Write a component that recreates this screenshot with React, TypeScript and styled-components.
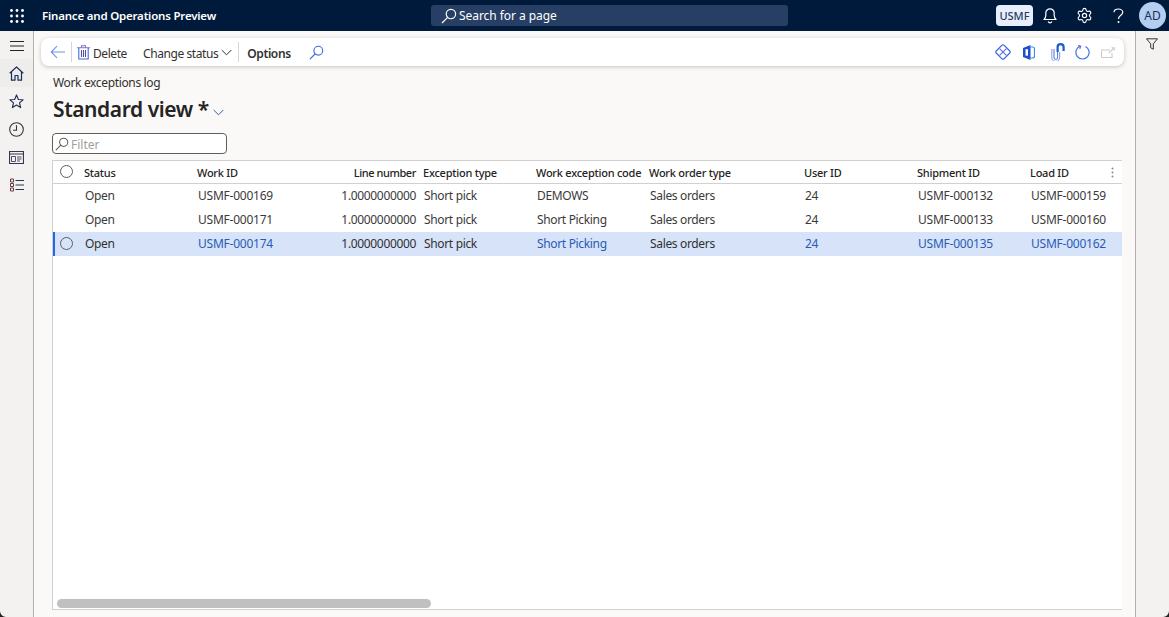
import React from "react";
import styled, { createGlobalStyle } from "styled-components";
import { Settings } from "lucide-react";

const Global = createGlobalStyle`
  html, body { margin: 0; padding: 0; height: 100%; overflow: hidden; background: #faf9f8; }
  #root { height: 100%; }
  * { box-sizing: border-box; }
`;

const Page = styled.div`
  position: relative;
  width: 1169px;
  height: 617px;
  display: grid;
  grid-template-rows: 31px 1fr;
  font-family: "Noto Sans", "Open Sans", sans-serif;
  font-size: 12px;
  color: #323130;
  overflow: hidden;
`;

const TopBar = styled.header`
  background: #001a3b;
  display: grid;
  grid-template-columns: 431px 357px 1fr;
  align-items: center;
  color: #fff;
`;
const Brand = styled.div`
  display: flex;
  align-items: center;
  padding-left: 10px;
  gap: 18px;
  font-weight: 600;
  font-size: 11.5px;
  letter-spacing: -0.2px;
`;
const SearchBox = styled.div`
  height: 21px;
  background: #273f64;
  border-radius: 3px;
  display: flex;
  align-items: center;
  padding-left: 10px;
  gap: 2px;
  font-size: 12px;
  letter-spacing: -0.05px;
  color: #fff;
`;
const TopActions = styled.div`
  display: flex;
  justify-content: flex-end;
  align-items: center;
  height: 31px;
`;
const Company = styled.div`
  width: 37px;
  height: 21px;
  background: #e8effc;
  color: #283a5e;
  border-radius: 4px;
  font-weight: 500;
  font-size: 11px;
  display: flex;
  align-items: center;
  justify-content: center;
`;
const TopIcon = styled.div<{ $w: number }>`
  width: ${(p) => p.$w}px;
  display: flex;
  justify-content: center;
  align-items: center;
`;
const Avatar = styled.div`
  width: 27px;
  height: 27px;
  border-radius: 50%;
  background: #b4cdf2;
  color: #1f2f4f;
  font-size: 12px;
  display: flex;
  align-items: center;
  justify-content: center;
  margin: 0 3px 0 4px;
`;

const Body = styled.div`
  display: grid;
  grid-template-columns: 34px 1fr 34px;
  min-height: 0;
`;
const LeftRail = styled.nav`
  background: #f3f2f1;
  border-right: 1px solid #b3b0ad;
  padding-top: 2px;
  display: flex;
  flex-direction: column;
  align-items: stretch;
`;
const RailItem = styled.div<{ $active?: boolean; $h: number }>`
  height: ${(p) => p.$h}px;
  display: flex;
  justify-content: center;
  align-items: center;
  background: ${(p) => (p.$active ? "#eeedec" : "transparent")};
  border-radius: ${(p) => (p.$active ? "0 4px 4px 0" : "0")};
`;
const RightRail = styled.aside`
  background: #f3f2f1;
  border-left: 1px solid #b3b0ad;
  display: flex;
  justify-content: center;
  padding-top: 7px;
  padding-right: 2px;
`;

const Main = styled.main`
  background: #faf9f8;
  padding: 7px 11px 7px 7px;
  display: flex;
  flex-direction: column;
  min-height: 0;
`;
const Toolbar = styled.div`
  height: 28px;
  background: #fff;
  border-radius: 8px;
  box-shadow: 0 1px 4px rgba(0, 0, 0, 0.22);
  display: flex;
  align-items: center;
  padding-left: 9px;
`;
const Sep = styled.span`
  width: 1px;
  height: 20px;
  background: #d8d6d4;
`;
const ToolButton = styled.div<{ $strong?: boolean; $ml: number }>`
  margin-left: ${(p) => p.$ml}px;
  display: flex;
  align-items: center;
  gap: 3px;
  font-size: 12px;
  letter-spacing: ${(p) => (p.$strong ? "-0.4px" : "-0.42px")};
  font-weight: ${(p) => (p.$strong ? 600 : 400)};
  color: #323130;
  white-space: nowrap;
`;
const ToolText = styled.span`
  padding-top: 2px;
`;
const ToolRight = styled.div`
  margin-left: auto;
  display: flex;
  align-items: center;
  padding-right: 3px;
`;
const ToolIcon = styled.span<{ $w: number }>`
  width: ${(p) => p.$w}px;
  display: flex;
  justify-content: center;
`;

const Content = styled.div`
  padding-left: 11px;
  padding-right: 2px;
  flex: 1;
  display: flex;
  flex-direction: column;
  min-height: 0;
`;
const Crumb = styled.div`
  margin-top: 9px;
  padding-left: 1px;
  height: 16px;
  line-height: 16px;
  font-size: 12px;
  letter-spacing: -0.35px;
  color: #323130;
`;
const TitleRow = styled.div`
  margin-top: 3px;
  padding-left: 1px;
  height: 30px;
  display: flex;
  align-items: center;
  gap: 4px;
`;
const Title = styled.h1`
  margin: 0;
  font-size: 21px;
  font-weight: 600;
  letter-spacing: -0.42px;
  color: #252423;
`;
const TitleChevron = styled.span`
  display: flex;
  padding-top: 7px;
`;
const FilterBox = styled.div`
  margin-top: 9px;
  width: 175px;
  height: 21px;
  background: #fff;
  border: 1px solid #605e5c;
  border-radius: 4px;
  display: flex;
  align-items: center;
  padding-left: 2px;
  gap: 2px;
  color: #a19f9d;
  font-size: 12px;
`;
const FilterText = styled.span`
  padding-top: 2px;
`;
const Grid = styled.div`
  position: relative;
  margin-top: 6px;
  flex: 1;
  background: #fff;
  border: 1px solid #d2d0ce;
  border-right: none;
  min-height: 0;
`;
const COLUMNS = "30px 113px 113px 113px 113px 113px 155px 113px 113px 93px";
const HeaderRow = styled.div`
  display: grid;
  grid-template-columns: ${COLUMNS};
  height: 23px;
  border-bottom: 1px solid #d2d0ce;
  align-items: center;
  font-weight: 500;
  font-size: 11px;
  letter-spacing: -0.24px;
  color: #252423;
`;
const Row = styled.div<{ $selected?: boolean }>`
  position: relative;
  display: grid;
  grid-template-columns: ${COLUMNS};
  height: 24px;
  padding-bottom: 1px;
  align-items: center;
  background: ${(p) => (p.$selected ? "#d6e3f9" : "#fff")};
  color: ${(p) => (p.$selected ? "#323130" : "#3b3a39")};
  font-size: 12px;
  letter-spacing: -0.34px;
`;
const SelBar = styled.span`
  position: absolute;
  left: 0;
  top: 0;
  bottom: 0;
  width: 2px;
  background: #2266e3;
`;
const Cell = styled.div<{ $right?: boolean; $link?: boolean; $head?: boolean; $id?: boolean }>`
  padding-left: ${(p) => (p.$head ? 1 : 2)}px;
  padding-right: ${(p) => (p.$right ? 6 : 0)}px;
  text-align: ${(p) => (p.$right ? "right" : "left")};
  color: ${(p) => (p.$link ? "#2a5bb5" : "inherit")};
  letter-spacing: ${(p) => (p.$id ? "-0.24px" : p.$head && p.$right ? "-0.42px" : "inherit")};
  white-space: nowrap;
`;
const CheckCell = styled.div<{ $head?: boolean }>`
  display: flex;
  justify-content: flex-start;
  padding-left: 7px;
  margin-top: ${(p) => (p.$head ? "-2px" : "0")};
`;
const Radio = styled.span`
  width: 13px;
  height: 13px;
  border-radius: 50%;
  border: 1px solid #605e5c;
  display: block;
`;
const MoreCell = styled.div`
  display: flex;
  justify-content: space-between;
  align-items: center;
  padding: 0 8px 0 1px;
`;
const ScrollThumb = styled.div`
  position: absolute;
  left: 4px;
  bottom: 1px;
  width: 374px;
  height: 9px;
  background: #c0c0c0;
  border-radius: 5px;
`;
const Corner = styled.svg<{ $right?: boolean }>`
  position: absolute;
  bottom: 0;
  ${(p) => (p.$right ? "right: 0;" : "left: 0;")}
`;

const Waffle = () => (
  <svg width="14" height="14" viewBox="0 0 14 14" fill="#fff">
    {[1.5, 7, 12.5].flatMap((y) =>
      [1.5, 7, 12.5].map((x) => <circle key={`${x}-${y}`} cx={x} cy={y} r="1.4" />)
    )}
  </svg>
);
const Magnifier = ({ color, size = 15 }: { color: string; size?: number }) => (
  <svg width={size} height={size} viewBox="0 0 15 15" fill="none" stroke={color} strokeWidth="1.1">
    <circle cx="9.3" cy="5.7" r="4.4" />
    <path d="M6 9 1.2 13.8" strokeLinecap="round" />
  </svg>
);
const Chevron = ({ color = "#323130", w = 11 }: { color?: string; w?: number }) => (
  <svg width={w} height="7" viewBox="0 0 11 7" fill="none" stroke={color} strokeWidth="1">
    <path d="M.7 1 5.500 5.800 10.300 1" />
  </svg>
);

const Data = [
  { code: "DEMOWS", work: "USMF-000169", ship: "USMF-000132", load: "USMF-000159" },
  { code: "Short Picking", work: "USMF-000171", ship: "USMF-000133", load: "USMF-000160" },
  { code: "Short Picking", work: "USMF-000174", ship: "USMF-000135", load: "USMF-000162", selected: true },
];

export default function App() {
  return (
    <Page>
      <Global />
      <TopBar>
        <Brand>
          <Waffle />
          <span>Finance and Operations Preview</span>
        </Brand>
        <SearchBox>
          <Magnifier color="#ffffff" size={16} />
          <span>Search for a page</span>
        </SearchBox>
        <TopActions>
          <Company>USMF</Company>
          <TopIcon $w={34}>
            <svg width="14" height="17" viewBox="0 0 14 17" fill="none" stroke="#fff" strokeWidth="1.2">
              <path d="M1 12.500c1-1 1.800-2 1.800-4V6a4.200 4.200 0 0 1 8.400 0v2.500c0 2 .8 3 1.800 4z" strokeLinejoin="round" />
              <path d="M5.200 14.500a1.900 1.900 0 0 0 3.600 0" />
            </svg>
          </TopIcon>
          <TopIcon $w={34}>
            <Settings size={17} color="#fff" strokeWidth={1.6} />
          </TopIcon>
          <TopIcon $w={34}>
            <svg width="11" height="16" viewBox="0 0 11 16" fill="none" stroke="#fff" strokeWidth="1.2">
              <path d="M1 4.200C1 2.200 3 1 5.300 1S9.800 2.400 9.800 4.300c0 3-4.300 3-4.300 6.700" />
              <circle cx="5.500" cy="14" r="1" fill="#fff" stroke="none" />
            </svg>
          </TopIcon>
          <Avatar>AD</Avatar>
        </TopActions>
      </TopBar>
      <Body>
        <LeftRail>
          <RailItem $h={26}>
            <svg width="14" height="10" viewBox="0 0 14 10" stroke="#252423" strokeWidth="1">
              <path d="M0 .5h14M0 5h14M0 9.500h14" />
            </svg>
          </RailItem>
          <RailItem $h={28} $active>
            <svg width="15" height="15" viewBox="0 0 15 15" fill="none" stroke="#1c2f57" strokeWidth="1.2">
              <path d="M.7 7.200 7.500 1l6.800 6.200M2.500 5.800v8.400h3.500V9.500h3v4.700h3.500V5.800" strokeLinejoin="round" />
            </svg>
          </RailItem>
          <RailItem $h={28}>
            <svg width="15" height="15" viewBox="0 0 16 16" fill="none" stroke="#1c2f57" strokeWidth="1.2">
              <path d="m8 1 2 4.800 5 .4-3.800 3.300 1.200 5L8 11.800l-4.400 2.700 1.200-5L1 6.200l5-.4z" strokeLinejoin="round" />
            </svg>
          </RailItem>
          <RailItem $h={28}>
            <svg width="15" height="15" viewBox="0 0 15 15" fill="none" stroke="#3c2f3f" strokeWidth="1.1">
              <circle cx="7.500" cy="7.500" r="6.800" />
              <path d="M7.500 3.200V8.200H4" />
            </svg>
          </RailItem>
          <RailItem $h={28}>
            <svg width="15" height="13" viewBox="0 0 15 13" fill="none" stroke="#3a3550" strokeWidth="1">
              <path d="M.5.500h14v12H.5zM.5 3h14" strokeWidth="1.2" />
              <path d="M2.500 5.500h4v5h-4zM8 6h4.500M8 8h4.500M8 10h3" stroke="#5c4a5e" />
            </svg>
          </RailItem>
          <RailItem $h={28}>
            <svg width="14" height="14" viewBox="0 0 14 14" fill="none" strokeWidth="1">
              <path d="M.5 1h3v3h-3zM.5 5.500h3v3h-3zM.5 10h3v3h-3z" stroke="#6b3a44" />
              <path d="M5.500 2.500H14M5.500 7H14M5.500 11.500H14" stroke="#2c3450" />
            </svg>
          </RailItem>
        </LeftRail>
        <Main>
          <Toolbar>
            <svg width="16" height="14" viewBox="0 0 16 14" fill="none" stroke="#6f92ea" strokeWidth="1.1">
              <path d="M15 7H1.500M7 1.200 1.200 7 7 12.800" />
            </svg>
            <ToolButton $ml={5}><Sep /></ToolButton>
            <ToolButton $ml={5}>
              <svg width="13" height="15" viewBox="0 0 13 15" fill="none" stroke="#3f6be0" strokeWidth="1.1">
                <path d="M0 2.700h13M4.500 2.500V.8h4v1.700" stroke="#8a6fc0" />
                <path d="M1.800 3v11h9.400V3" />
                <path d="M4.500 5v7M6.500 5v7M8.500 5v7" stroke="#5e4a9c" />
              </svg>
              <ToolText>Delete</ToolText>
            </ToolButton>
            <ToolButton $ml={16}>
              <ToolText>Change status</ToolText>
              <Chevron />
            </ToolButton>
            <ToolButton $ml={6}><Sep /></ToolButton>
            <ToolButton $ml={8} $strong><ToolText>Options</ToolText></ToolButton>
            <ToolButton $ml={18}><Magnifier color="#3f6be0" size={15} /></ToolButton>
            <ToolRight>
              <ToolIcon $w={16}>
                <svg width="16" height="16" viewBox="0 0 16 16" fill="none" stroke="#3566e6" strokeWidth="1.2">
                  <path d="M7 1.200a1.400 1.400 0 0 1 2 0l5.800 5.800a1.400 1.400 0 0 1 0 2L9 14.800a1.400 1.400 0 0 1-2 0L1.200 9a1.400 1.400 0 0 1 0-2z" strokeLinejoin="round" />
                  <path d="M4.600 4.600l6.800 6.800M11.400 4.600l-6.800 6.800" stroke="#6a6fe0" />
                </svg>
              </ToolIcon>
              <ToolIcon $w={36}>
                <svg width="12" height="15" viewBox="0 0 12 15">
                  <path d="M0 3 7.500 0v15L0 12z" fill="#1f4fcf" />
                  <path d="M7.500 2h2a2 2 0 0 1 2 2v7a2 2 0 0 1-2 2h-2" fill="none" stroke="#2f8fe0" strokeWidth="1.200" />
                  <path d="M2.500 4.200h2.500v6.500H2.500z" fill="#fff" />
                </svg>
              </ToolIcon>
              <ToolIcon $w={22}>
                <svg width="14" height="18" viewBox="0 0 14 18" fill="none" stroke="#5a7fe0" strokeWidth="1.1">
                  <path d="M3 6v8.400a1.800 1.800 0 0 0 3.600 0V5" />
                  <path d="M.8 6v8.400a3.900 3.900 0 0 0 7.800 0V9" stroke="#8aa0e4" />
                  <path d="M6.600 9V4.200a3 3 0 0 1 6 0V8" stroke="#1c5ad8" strokeWidth="2.200" />
                </svg>
              </ToolIcon>
              <ToolIcon $w={26}>
                <svg width="15" height="15" viewBox="0 0 15 15" fill="none" stroke="#3f74e8" strokeWidth="1.2">
                  <path d="M5 1.300A6.600 6.600 0 1 0 10.500 1.500" />
                  <path d="M3 .7 5.600 1.300 4.800 3.900" stroke="#6a5fd8" />
                </svg>
              </ToolIcon>
              <ToolIcon $w={26}>
                <svg width="14" height="11" viewBox="0 0 14 11" fill="none" stroke="#cfcdcb" strokeWidth="1.1">
                  <path d="M9 3H.5v7.500h10.500V6" />
                  <path d="M8 6 13 1M10.500 .7H13.300V3.500" />
                </svg>
              </ToolIcon>
            </ToolRight>
          </Toolbar>
          <Content>
            <Crumb>Work exceptions log</Crumb>
            <TitleRow>
              <Title>Standard view *</Title>
              <TitleChevron><Chevron color="#3a5a94" /></TitleChevron>
            </TitleRow>
            <FilterBox>
              <Magnifier color="#605e5c" size={14} />
              <FilterText>Filter</FilterText>
            </FilterBox>
            <Grid>
              <HeaderRow>
                <CheckCell $head><Radio /></CheckCell>
                <Cell $head>Status</Cell>
                <Cell $head>Work ID</Cell>
                <Cell $head $right>Line number</Cell>
                <Cell $head>Exception type</Cell>
                <Cell $head>Work exception code</Cell>
                <Cell $head>Work order type</Cell>
                <Cell $head>User ID</Cell>
                <Cell $head>Shipment ID</Cell>
                <MoreCell>
                  <span>Load ID</span>
                  <svg width="3" height="11" viewBox="0 0 3 11" fill="#8a8886">
                    <circle cx="1.500" cy="1.500" r="1" />
                    <circle cx="1.500" cy="5.500" r="1" />
                    <circle cx="1.500" cy="9.500" r="1" />
                  </svg>
                </MoreCell>
              </HeaderRow>
              {Data.map((d) => (
                <Row key={d.work} $selected={d.selected}>
                  {d.selected && <SelBar />}
                  <CheckCell>{d.selected && <Radio />}</CheckCell>
                  <Cell>Open</Cell>
                  <Cell $id $link={d.selected}>{d.work}</Cell>
                  <Cell $right>1.0000000000</Cell>
                  <Cell>Short pick</Cell>
                  <Cell $link={d.selected}>{d.code}</Cell>
                  <Cell>Sales orders</Cell>
                  <Cell $link={d.selected}>24</Cell>
                  <Cell $id $link={d.selected}>{d.ship}</Cell>
                  <Cell $id $link={d.selected}>{d.load}</Cell>
                </Row>
              ))}
              <ScrollThumb />
            </Grid>
          </Content>
        </Main>
        <RightRail>
          <svg width="12" height="12" viewBox="0 0 12 12" fill="none" stroke="#323130" strokeWidth="1">
            <path d="M.5.800h11L7.300 5.800v5.400L4.700 9.800v-4z" strokeLinejoin="round" />
          </svg>
        </RightRail>
      </Body>
      <Corner width="6" height="6" viewBox="0 0 6 6">
        <path d="M0 0a6 6 0 0 0 6 6H0z" fill="#222" />
      </Corner>
      <Corner $right width="6" height="6" viewBox="0 0 6 6">
        <path d="M6 0a6 6 0 0 1-6 6h6z" fill="#222" />
      </Corner>
    </Page>
  );
}
